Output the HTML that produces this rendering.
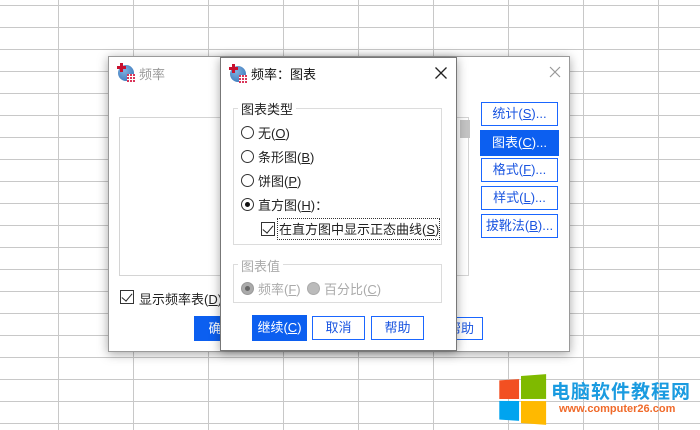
<!DOCTYPE html>
<html><head><meta charset="utf-8"><style>
*{margin:0;padding:0;box-sizing:border-box}
body{width:700px;height:430px;overflow:hidden;background:#fff;position:relative;font-family:"Liberation Sans","Noto Sans CJK SC",sans-serif;font-size:13px;color:#222}
.a{position:absolute}
.grid{position:absolute;left:0;top:0;width:700px;height:430px;
background-image:linear-gradient(#c8c8c8 1px,transparent 1px),linear-gradient(90deg,#c8c8c8 1px,transparent 1px);
background-size:75px 22px,75px 22px;background-position:0 5px,58px 0}
.dlg{position:absolute;background:#fff;border:1px solid #9a9a9a;box-shadow:0 2px 10px rgba(0,0,0,.35)}
.btn{position:absolute;border:1px solid #1a66ff;color:#1a55e0;text-align:center;font-size:13px;line-height:21px;background:#fff}
.btn.f{background:#0c5ff0;color:#fff;border-color:#0c5ff0}
u{text-decoration:underline}
.rad{position:absolute;width:13px;height:13px;border:1px solid #333;border-radius:50%;background:#fff}
.grp{position:absolute;border:1px solid #dcdcdc}
.lg{position:absolute;background:#fff;padding:0 3px;font-size:13px}
.chk{position:absolute;width:14px;height:14px;border:1px solid #333;background:#fff}
.chk:after{content:"";position:absolute;left:3px;top:0px;width:5px;height:9px;border:solid #222;border-width:0 1.5px 1.5px 0;transform:rotate(40deg)}
.icon{position:absolute;width:16px;height:16px;border-radius:50%;background:radial-gradient(circle at 40% 35%,#7fb0e0,#2f6fb5)}
.icon:before{content:"";position:absolute;left:-1px;top:-2px;width:9px;height:9px;background:linear-gradient(#c8102e,#c8102e) 3px 0/3px 9px no-repeat,linear-gradient(#c8102e,#c8102e) 0 3px/9px 3px no-repeat}
.icon:after{content:"";position:absolute;right:-1px;bottom:-1px;width:8px;height:8px;background:#d9365a;background-image:linear-gradient(90deg,transparent 2px,#fff 2px,#fff 3px,transparent 3px,transparent 5px,#fff 5px,#fff 6px,transparent 6px),linear-gradient(transparent 2px,#fff 2px,#fff 3px,transparent 3px,transparent 5px,#fff 5px,#fff 6px,transparent 6px)}
</style></head><body>
<div class="grid"></div>

<div class="dlg" style="left:108px;top:56px;width:462px;height:296px">
  <div class="icon" style="left:9px;top:8px"></div>
  <div class="a" style="left:30px;top:7px;color:#999;font-size:13px">频率</div>
  <svg class="a" style="left:440px;top:9px" width="12" height="12"><path d="M1 1L11 11M11 1L1 11" stroke="#999" stroke-width="1.2"/></svg>
  <div class="a" style="left:10px;top:60px;width:350px;height:159px;border:1px solid #d4d4d4"></div>
  <div class="a" style="left:351px;top:63px;width:10px;height:18px;background:#c4c4c4"></div>
  <div class="chk" style="left:11px;top:233px"></div>
  <div class="a" style="left:30px;top:232px">显示频率表(<u>D</u>)</div>
  <div class="btn f" style="left:85px;top:259px;width:55px;height:25px;line-height:23px">确定</div>
  <div class="btn" style="left:330px;top:260px;width:44px;height:23px">帮助</div>
  <div class="btn" style="left:372px;top:45px;width:77px;height:24px">统计(<u>S</u>)...</div>
  <div class="btn f" style="left:371px;top:73px;width:79px;height:26px;line-height:24px">图表(<u>C</u>)...</div>
  <div class="btn" style="left:372px;top:101px;width:77px;height:24px">格式(<u>F</u>)...</div>
  <div class="btn" style="left:372px;top:129px;width:77px;height:24px">样式(<u>L</u>)...</div>
  <div class="btn" style="left:372px;top:157px;width:77px;height:24px">拔靴法(<u>B</u>)...</div>
</div>

<div class="dlg" style="left:220px;top:57px;width:237px;height:294px;border-color:#777">
  <div class="icon" style="left:9px;top:8px"></div>
  <div class="a" style="left:30px;top:6px;font-size:13px;color:#111">频率：图表</div>
  <svg class="a" style="left:214px;top:9px" width="12" height="12"><path d="M0.5 0.5L11.5 11.5M11.5 0.5L0.5 11.5" stroke="#222" stroke-width="1.3"/></svg>
  <div class="grp" style="left:12px;top:50px;width:209px;height:137px"></div>
  <div class="lg" style="left:17px;top:41px">图表类型</div>
  <div class="rad" style="left:20px;top:68px"></div><div class="a" style="left:37px;top:65px">无(<u>O</u>)</div>
  <div class="rad" style="left:20px;top:92px"></div><div class="a" style="left:37px;top:89px">条形图(<u>B</u>)</div>
  <div class="rad" style="left:20px;top:116px"></div><div class="a" style="left:37px;top:113px">饼图(<u>P</u>)</div>
  <div class="rad" style="left:20px;top:140px"></div><div class="a" style="left:24px;top:144px;width:5px;height:5px;border-radius:50%;background:#111"></div>
  <div class="a" style="left:37px;top:137px">直方图(<u>H</u>)：</div>
  <div class="chk" style="left:40px;top:164px"></div>
  <div class="a" style="left:56px;top:160px;width:163px;height:22px;border:1px dotted #333"></div>
  <div class="a" style="left:58px;top:161px">在直方图中显示正态曲线(<u>S</u>)</div>
  <div class="grp" style="left:12px;top:206px;width:209px;height:39px"></div>
  <div class="lg" style="left:17px;top:198px;color:#aaa">图表值</div>
  <div class="a" style="left:20px;top:224px;width:13px;height:13px;border-radius:50%;background:#aaa;border:1px solid #999"></div>
  <div class="a" style="left:24px;top:228px;width:5px;height:5px;border-radius:50%;background:#666"></div>
  <div class="a" style="left:37px;top:221px;color:#aaa">频率(<u>F</u>)</div>
  <div class="a" style="left:86px;top:224px;width:13px;height:13px;border-radius:50%;background:#bbb;border:1px solid #aaa"></div>
  <div class="a" style="left:103px;top:221px;color:#aaa">百分比(<u>C</u>)</div>
  <div class="btn f" style="left:31px;top:257px;width:55px;height:26px;line-height:24px">继续(<u>C</u>)</div>
  <div class="btn" style="left:91px;top:258px;width:53px;height:24px">取消</div>
  <div class="btn" style="left:150px;top:258px;width:53px;height:24px">帮助</div>
</div>

<div class="a" style="left:497px;top:376px;width:48px;height:47px;transform:perspective(80px) rotateY(-14deg)">
  <div class="a" style="left:0;top:3px;width:22px;height:20px;background:#f25022"></div>
  <div class="a" style="left:24px;top:0;width:24px;height:23px;background:#7fba00"></div>
  <div class="a" style="left:0;top:25px;width:22px;height:20px;background:#00a4ef"></div>
  <div class="a" style="left:24px;top:25px;width:24px;height:22px;background:#ffb900"></div>
</div>
<div class="a" style="left:551px;top:377px;font-size:19px;font-weight:bold;color:#1a9be0;letter-spacing:1px">电脑软件教程网</div>
<div class="a" style="left:559px;top:403px;font-size:11px;font-weight:bold;color:#f06a2a">www.computer26.com</div>
</body></html>
